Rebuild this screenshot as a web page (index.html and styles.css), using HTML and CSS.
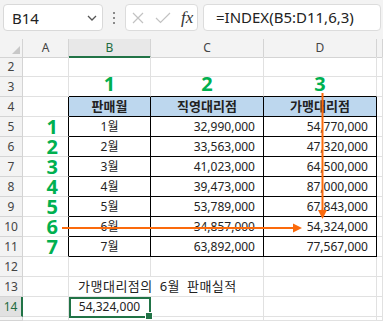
FILE: index.html
```html
<!DOCTYPE html>
<html lang="ko">
  <head>
    <meta charset="UTF-8" />
    <title>INDEX</title>
    <link rel="stylesheet" href="styles.css">
  </head>

  <body>
    <div class="page">
      <div class="toolbar">
        <div class="namebox">
          <span>B14</span>
          <svg class="chev" width="10" height="6" viewBox="0 0 10 6"><polyline points="1,1 5,5 9,1" fill="none" stroke="#555" stroke-width="1.3"/></svg>
        </div>
        <div class="dots"><i></i><i></i><i></i></div>
        <div class="fxbox">
          <svg width="12" height="12" viewBox="0 0 12 12"><path d="M1 1L11 11M11 1L1 11" stroke="#c2c2c2" stroke-width="1.2"/></svg>
          <svg width="16" height="12" viewBox="0 0 16 12"><polyline points="1,6 5.5,10.5 15,1" fill="none" stroke="#c2c2c2" stroke-width="1.2"/></svg>
          <span class="fx">fx</span>
        </div>
        <div class="formula">=INDEX(B5:D11,6,3)</div>
      </div>

      <div class="sheet">
        <div class="row hdr">
          <div class="corner"><b></b></div>
          <div class="colh">A</div>
          <div class="colh sel">B</div>
          <div class="colh">C</div>
          <div class="colh">D</div>
          <div class="colh"></div>
        </div>

        <div class="row">
          <div class="rh">2</div><div class="c"></div><div class="c"></div><div class="c"></div><div class="c"></div><div class="c"></div>
        </div>
        <div class="row">
          <div class="rh">3</div><div class="c"></div>
          <div class="c tb ctr big top">1</div><div class="c tb ctr big top">2</div><div class="c tb ctr big top">3</div><div class="c"></div>
        </div>
        <div class="row">
          <div class="rh">4</div><div class="c tl"></div>
          <div class="c t th">판매월</div><div class="c t th">직영대리점</div><div class="c t th">가맹대리점</div><div class="c"></div>
        </div>
        <div class="row">
          <div class="rh">5</div><div class="c tl big rt">1</div>
          <div class="c t ctr">1월</div><div class="c t num">32,990,000</div><div class="c t num">54,770,000</div><div class="c"></div>
        </div>
        <div class="row">
          <div class="rh">6</div><div class="c tl big rt">2</div>
          <div class="c t ctr">2월</div><div class="c t num">33,563,000</div><div class="c t num">47,320,000</div><div class="c"></div>
        </div>
        <div class="row">
          <div class="rh">7</div><div class="c tl big rt">3</div>
          <div class="c t ctr">3월</div><div class="c t num">41,023,000</div><div class="c t num">64,500,000</div><div class="c"></div>
        </div>
        <div class="row">
          <div class="rh">8</div><div class="c tl big rt">4</div>
          <div class="c t ctr">4월</div><div class="c t num">39,473,000</div><div class="c t num">87,000,000</div><div class="c"></div>
        </div>
        <div class="row">
          <div class="rh">9</div><div class="c tl big rt">5</div>
          <div class="c t ctr">5월</div><div class="c t num">53,789,000</div><div class="c t num">67,843,000</div><div class="c"></div>
        </div>
        <div class="row">
          <div class="rh">10</div><div class="c tl big rt">6</div>
          <div class="c t ctr">6월</div><div class="c t num">34,857,000</div><div class="c t num">54,324,000</div><div class="c"></div>
        </div>
        <div class="row">
          <div class="rh">11</div><div class="c tl big rt">7</div>
          <div class="c t ctr">7월</div><div class="c t num">63,892,000</div><div class="c t num">77,567,000</div><div class="c"></div>
        </div>
        <div class="row">
          <div class="rh">12</div><div class="c"></div><div class="c"></div><div class="c"></div><div class="c"></div><div class="c"></div>
        </div>
        <div class="row">
          <div class="rh">13</div><div class="c"></div>
          <div class="c span2 note">가맹대리점의 6월 판매실적</div><div class="c"></div><div class="c"></div>
        </div>
        <div class="row">
          <div class="rh rsel">14</div><div class="c"></div>
          <div class="c ctr active">54,324,000</div><div class="c"></div><div class="c"></div><div class="c"></div>
        </div>
        <div class="row last">
          <div class="rh"></div><div class="c"></div><div class="c"></div><div class="c"></div><div class="c"></div><div class="c"></div>
        </div>
      </div>

      <svg class="arrows" width="383" height="321" viewBox="0 0 383 321">
        <line x1="322.5" y1="93" x2="322.5" y2="211" stroke="#fb6a0c" stroke-width="2"/>
        <polygon points="318,210 327,210 322.5,219" fill="#fb6a0c"/>
        <line x1="62" y1="228" x2="294" y2="228" stroke="#fb6a0c" stroke-width="2"/>
        <polygon points="293,223.5 293,232.5 302,228" fill="#fb6a0c"/>
      </svg>
    </div>
  </body>
</html>
```

FILE: styles.css
```css
* {
  margin: 0;
  padding: 0;
  box-sizing: border-box;
}

body {
  width: 383px;
  height: 321px;
  overflow: hidden;
  font-family: "Noto Sans", "Noto Sans CJK KR", sans-serif;
  color: #222;
  background: #fff;
}

.page {
  position: relative;
  width: 383px;
  height: 321px;
  overflow: hidden;
}

/* formula bar */
.toolbar {
  height: 39px;
  background: #f3f3f3;
  display: flex;
  align-items: flex-start;
  padding: 4px 0 0 3px;
}

.namebox {
  width: 100px;
  height: 27px;
  background: #fff;
  border: 1px solid #d9d9d9;
  border-radius: 4px;
  display: flex;
  align-items: center;
  justify-content: space-between;
  padding: 0 5px 0 8px;
  font-size: 15px;
  color: #222;
}

.dots {
  width: 22px;
  height: 27px;
  display: flex;
  flex-direction: column;
  align-items: center;
  justify-content: center;
  gap: 3px;
}

.dots i {
  display: block;
  width: 2px;
  height: 2px;
  background: #8a8a8a;
}

.fxbox {
  width: 73px;
  height: 27px;
  background: #fff;
  border: 1px solid #dcdcdc;
  border-radius: 4px;
  display: flex;
  align-items: center;
  gap: 11px;
  padding-left: 6px;
}

.fx {
  font-family: "Liberation Serif", serif;
  font-style: italic;
  font-size: 17px;
  color: #333;
  margin-left: -1px;
}

.formula {
  flex: 1;
  margin-left: 5px;
  margin-right: 2px;
  height: 27px;
  background: #fff;
  border: 1px solid #dcdcdc;
  border-radius: 4px;
  padding-left: 12px;
  font-size: 15px;
  line-height: 25px;
  color: #222;
}

/* sheet */
.row {
  display: grid;
  grid-template-columns: 23px 46px 82px 113px 113px 6px;
  height: 20px;
}

.row.hdr {
  height: 18px;
  background: #f3f3f3;
}

.row.last {
  height: 4px;
}

.corner {
  position: relative;
  border-right: 1px solid #d4d4d4;
  border-bottom: 1px solid #d4d4d4;
}

.corner b {
  position: absolute;
  right: 2px;
  bottom: 3px;
  width: 0;
  height: 0;
  border-left: 8px solid transparent;
  border-bottom: 8px solid #c8c8c8;
}

.colh {
  border-right: 1px solid #d4d4d4;
  border-bottom: 1px solid #d4d4d4;
  font-size: 12px;
  color: #444;
  text-align: center;
  line-height: 17px;
}

.colh.sel {
  background: #e8e8e8;
  color: #1e6b40;
  border-bottom: 2px solid #217346;
}

.rh {
  background: #f3f3f3;
  border-right: 1px solid #d4d4d4;
  border-bottom: 1px solid #d4d4d4;
  font-size: 12px;
  color: #444;
  text-align: center;
  line-height: 19px;
}

.rh.rsel {
  background: #e1e1e1;
  color: #1e6b40;
  border-right: 2px solid #217346;
}

.c {
  position: relative;
  border-right: 1px solid #e1e1e1;
  border-bottom: 1px solid #e1e1e1;
  font-size: 12px;
  line-height: 19px;
  white-space: nowrap;
  overflow: visible;
}

.c.t {
  border-right: 1px solid #000;
  border-bottom: 1px solid #000;
}

.c.tb {
  border-bottom: 1px solid #000;
}

.c.tl {
  border-right: 1px solid #000;
}

.th {
  background: #bdd7ee;
  font-weight: bold;
  font-size: 13px;
  text-align: center;
}

.ctr {
  text-align: center;
}

.num {
  text-align: right;
  padding-right: 8px;
}

.big {
  font-size: 20px;
  font-weight: bold;
  color: #00b050;
  line-height: 19px;
}

.big.top {
  line-height: 14px;
}

.big.rt {
  text-align: right;
  padding-right: 10px;
}

.span2 {
  grid-column: span 2;
}

.note {
  padding-left: 9px;
  font-size: 13px;
  letter-spacing: 0.5px;
  word-spacing: 3px;
}

.active::after {
  content: "";
  position: absolute;
  top: 0;
  left: 0;
  right: -1px;
  bottom: -2px;
  border: 2px solid #217346;
}

.active::before {
  content: "";
  position: absolute;
  right: -3px;
  bottom: -4px;
  width: 6px;
  height: 6px;
  background: #217346;
  border: 1px solid #fff;
  z-index: 1;
}

.arrows {
  position: absolute;
  top: 0;
  left: 0;
  pointer-events: none;
}
```
